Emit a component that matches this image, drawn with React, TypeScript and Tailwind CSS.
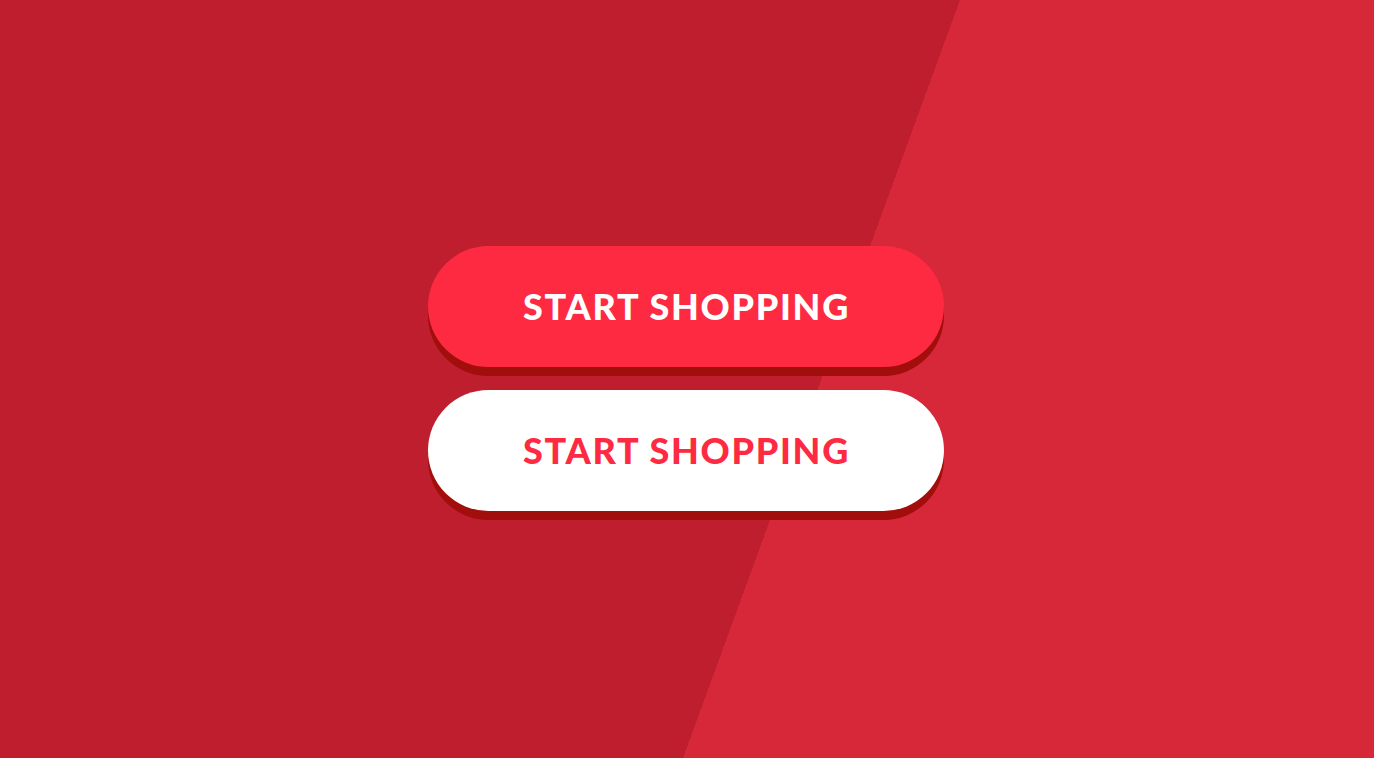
const App = () => {
  return (
    <div className="h-screen w-full bg-[linear-gradient(110.07deg,#be1e2e_58.15%,#d72839_58.15%)] flex flex-col items-center justify-center gap-[23px] pr-[3px] pb-[2px] font-['Lato',sans-serif]">
      <button className="w-[516px] h-[121px] rounded-full bg-[#fd2a41] shadow-[0_9px_0_#a20e0b] text-white text-[36px] font-black tracking-[1.7px] pl-[2px]">
        START SHOPPING
      </button>
      <button className="w-[516px] h-[121px] rounded-full bg-white shadow-[0_9px_0_#a20e0b] text-[#fd2a41] text-[36px] font-black tracking-[1.7px] pl-[2px]">
        START SHOPPING
      </button>
    </div>
  );
};
export default App;
